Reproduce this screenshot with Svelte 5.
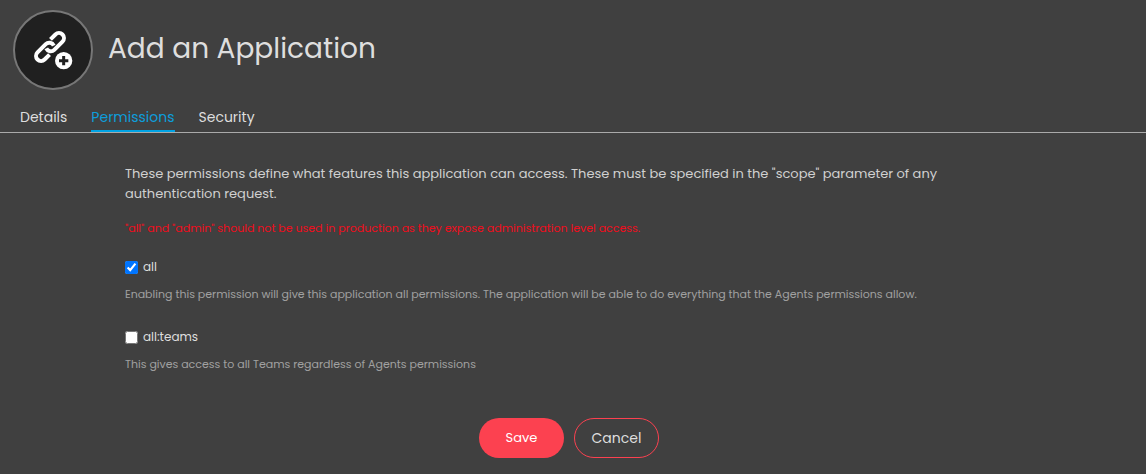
<script>
  const tabs = ['Details', 'Permissions', 'Security'];
  let active = $state('Permissions');
  let permissions = $state([
    {
      name: 'all',
      checked: true,
      text: 'Enabling this permission will give this application all permissions. The application will be able to do everything that the Agents permissions allow.'
    },
    {
      name: 'all:teams',
      checked: false,
      text: 'This gives access to all Teams regardless of Agents permissions'
    }
  ]);
</script>

<header>
  <span class="badge">
    <svg viewBox="0 0 120 120" aria-hidden="true">
      <g transform="translate(51 51) rotate(-45)" fill="none" stroke="#fff" stroke-width="12">
        <path d="M-17 15 H-38 A15 15 0 0 1 -38 -15 H-3 A15 15 0 0 1 11 5" />
        <path d="M17 -15 H38 A15 15 0 0 1 38 15 H3 A15 15 0 0 1 -11 -5" />
      </g>
      <circle cx="92" cy="92" r="26" fill="#fff" />
      <path d="M92 78v28M78 92h28" stroke="#202020" stroke-width="9" />
    </svg>
  </span>
  <h1>Add an Application</h1>
</header>

<nav>
  {#each tabs as tab}
    <button class="tab" class:active={tab === active} onclick={() => (active = tab)}>{tab}</button>
  {/each}
</nav>

<main>
  <p class="intro">
    These permissions define what features this application can access. These must be specified in the "scope" parameter of any authentication request.
  </p>
  <p class="warning">"all" and "admin" should not be used in production as they expose administration level access.</p>
  {#each permissions as permission}
    <section>
      <label>
        <input type="checkbox" bind:checked={permission.checked} />
        {permission.name}
      </label>
      <p class="hint">{permission.text}</p>
    </section>
  {/each}
</main>

<footer>
  <button class="save">Save</button>
  <button class="cancel">Cancel</button>
</footer>

<style>
  :global(body) {
    background: #404040;
    color: #dedede;
    font-family: Poppins, Inter, sans-serif;
    font-size: 13px;
    line-height: 20px;
  }
  h1, p { margin: 0; font-weight: 400; }
  button { font: inherit; color: inherit; background: none; border: 0; padding: 0; cursor: pointer; }
  header { display: flex; align-items: center; gap: 15px; padding: 10px 13px; }
  .badge {
    display: flex;
    flex-shrink: 0;
    align-items: center;
    justify-content: center;
    box-sizing: border-box;
    width: 80px;
    height: 80px;
    border: 2px solid #777;
    border-radius: 50%;
    background: #202020;
  }
  .badge svg { width: 40px; height: 40px; }
  h1 { font-size: 28px; line-height: 40px; padding-bottom: 2px; }
  nav { display: flex; gap: 24px; padding: 4px 20px 0; border-bottom: 1px solid #aaa; }
  .tab { font-size: 14px; line-height: 26px; border-bottom: 2px solid transparent; }
  .tab.active { color: #0d9ddb; border-color: #00a3e4; }
  main { padding: 31px 125px 0; }
  .intro { color: #d0d0d0; }
  .warning { margin-top: 14px; color: #f00c1c; font-size: 11px; }
  section { padding: 19px 0 4px; }
  label { display: flex; align-items: center; gap: 5px; width: fit-content; font-size: 12px; }
  input { width: 13px; height: 13px; margin: 0; }
  .hint { margin-top: 7px; color: #a0a0a0; font-size: 11px; }
  footer { display: flex; justify-content: center; gap: 10px; padding: 40px 8px 16px 0; }
  footer button { box-sizing: border-box; min-width: 85px; height: 40px; border-radius: 20px; }
  .save { background: #fc4150; color: #fff; }
  .cancel { border: 1px solid #fc4150; font-size: 14px; }
</style>
